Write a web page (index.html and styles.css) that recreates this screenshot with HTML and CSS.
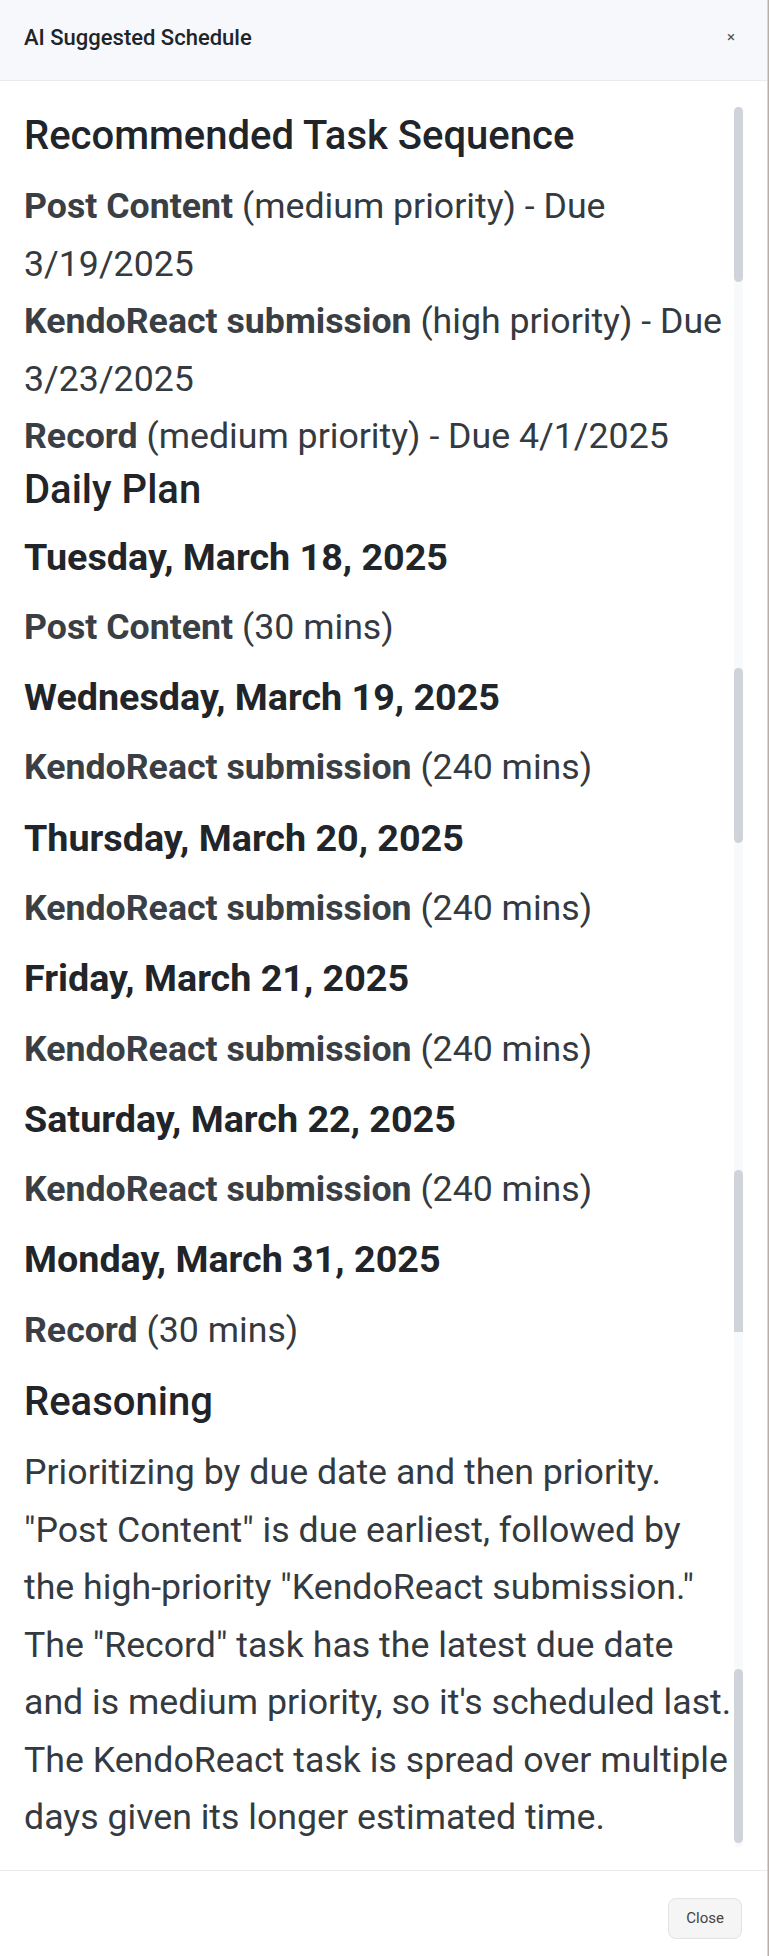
FILE: index.html
```html
<!DOCTYPE html>
<html lang="en">
<head>
  <meta charset="UTF-8">
  <meta name="viewport" content="width=device-width, initial-scale=1.0">
  <title>AI Suggested Schedule</title>
  <link rel="stylesheet" href="styles.css">
</head>
<body>
  <div class="modal">
    <div class="modal-header">
      <h5 class="modal-title">AI Suggested Schedule</h5>
      <button class="btn-close" aria-label="Close">&times;</button>
    </div>

    <div class="modal-body">
      <div class="schedule">
        <h3>Recommended Task Sequence</h3>
        <ol class="sequence">
          <li><strong>Post Content</strong> (medium priority) - Due 3/19/2025</li>
          <li><strong>KendoReact submission</strong> (high priority) - Due 3/23/2025</li>
          <li><strong>Record</strong> (medium priority) - Due 4/1/2025</li>
        </ol>

        <h3 class="plan-title">Daily Plan</h3>
        <div class="day">
          <h4>Tuesday, March 18, 2025</h4>
          <ul><li><strong>Post Content</strong> (30 mins)</li></ul>
        </div>
        <div class="day">
          <h4>Wednesday, March 19, 2025</h4>
          <ul><li><strong>KendoReact submission</strong> (240 mins)</li></ul>
        </div>
        <div class="day">
          <h4>Thursday, March 20, 2025</h4>
          <ul><li><strong>KendoReact submission</strong> (240 mins)</li></ul>
        </div>
        <div class="day">
          <h4>Friday, March 21, 2025</h4>
          <ul><li><strong>KendoReact submission</strong> (240 mins)</li></ul>
        </div>
        <div class="day">
          <h4>Saturday, March 22, 2025</h4>
          <ul><li><strong>KendoReact submission</strong> (240 mins)</li></ul>
        </div>
        <div class="day">
          <h4>Monday, March 31, 2025</h4>
          <ul><li><strong>Record</strong> (30 mins)</li></ul>
        </div>

        <h3 class="reasoning-title">Reasoning</h3>
        <p class="reasoning">Prioritizing by due date and then priority. "Post Content" is due earliest, followed by the high-priority "KendoReact submission." The "Record" task has the latest due date and is medium priority, so it's scheduled last. The KendoReact task is spread over multiple days given its longer estimated time.</p>
      </div>

      <!-- scrollbar as it shows in the captured frames -->
      <div class="scroll-track">
        <span class="thumb thumb-1"></span>
        <span class="thumb thumb-2"></span>
        <span class="thumb thumb-3"></span>
        <span class="thumb thumb-4"></span>
      </div>
    </div>

    <div class="modal-footer">
      <button class="btn">Close</button>
    </div>
  </div>
</body>
</html>
```

FILE: styles.css
```css
html, body {
  margin: 0;
  padding: 0;
}

body {
  font-family: Roboto, "Liberation Sans", Arial, sans-serif;
  background-color: #b8aea6;
  color: #343a40;
}

.modal {
  width: 767px;
  background-color: #fff;
  border-right: 1px solid #d3d6da;
}

/* Header */
.modal-header {
  height: 81px;
  display: flex;
  align-items: center;
  justify-content: space-between;
  padding: 0 32px 6px 24px;
  box-sizing: border-box;
  background-color: #f7f8fc;
  border-bottom: 1px solid #e9ecef;
}

.modal-title {
  margin: 0;
  font-size: 22px;
  font-weight: 500;
  color: #212529;
}

.btn-close {
  border: none;
  background: none;
  padding: 0;
  font-family: inherit;
  font-size: 15px;
  line-height: 1;
  color: #555;
  cursor: pointer;
}

/* Body */
.modal-body {
  display: flex;
  padding: 26px 24px 23px 24px;
}

.schedule {
  flex: 1;
  padding-top: 5px;
  font-size: 35.7px;
  line-height: 57.5px;
}

.schedule h3 {
  margin: 0 0 18px;
  font-size: 40px;
  line-height: 48px;
  font-weight: 500;
  color: #212529;
}

.schedule .plan-title {
  margin-bottom: 15px;
}

.schedule strong {
  font-weight: 700;
  color: #3a3f45;
}

.sequence,
.day ul {
  list-style: none;
  margin: 0;
  padding: 0;
}

.day h4 {
  margin: 0 0 12.8px;
  font-size: 37.7px;
  font-weight: 700;
  color: #212529;
}

.day li {
  margin-bottom: 12.8px;
}

.schedule .reasoning-title {
  margin-top: 19px;
}

.reasoning {
  margin: 0;
}

.scroll-track {
  width: 9px;
  display: flex;
  flex-direction: column;
  background-color: #f8f9fa;
  border-radius: 5px;
}

.thumb {
  display: block;
  background-color: #ced4da;
  border-radius: 5px;
}

.thumb-1 { height: 175px; }
.thumb-2 { height: 175px; margin-top: 386px; }
.thumb-3 { height: 162px; margin-top: 327px; border-radius: 5px 5px 0 0; }
.thumb-4 { height: 174px; margin-top: 337px; }

/* Footer */
.modal-footer {
  display: flex;
  justify-content: flex-end;
  padding: 27px 25px 22px;
  border-top: 1px solid #e9ecef;
}

.btn {
  height: 41px;
  padding: 0 17px;
  font-family: inherit;
  font-size: 15px;
  color: #444;
  background-color: #f5f5f5;
  border: 1px solid #e2e3e5;
  border-radius: 8px;
  cursor: pointer;
}
```
